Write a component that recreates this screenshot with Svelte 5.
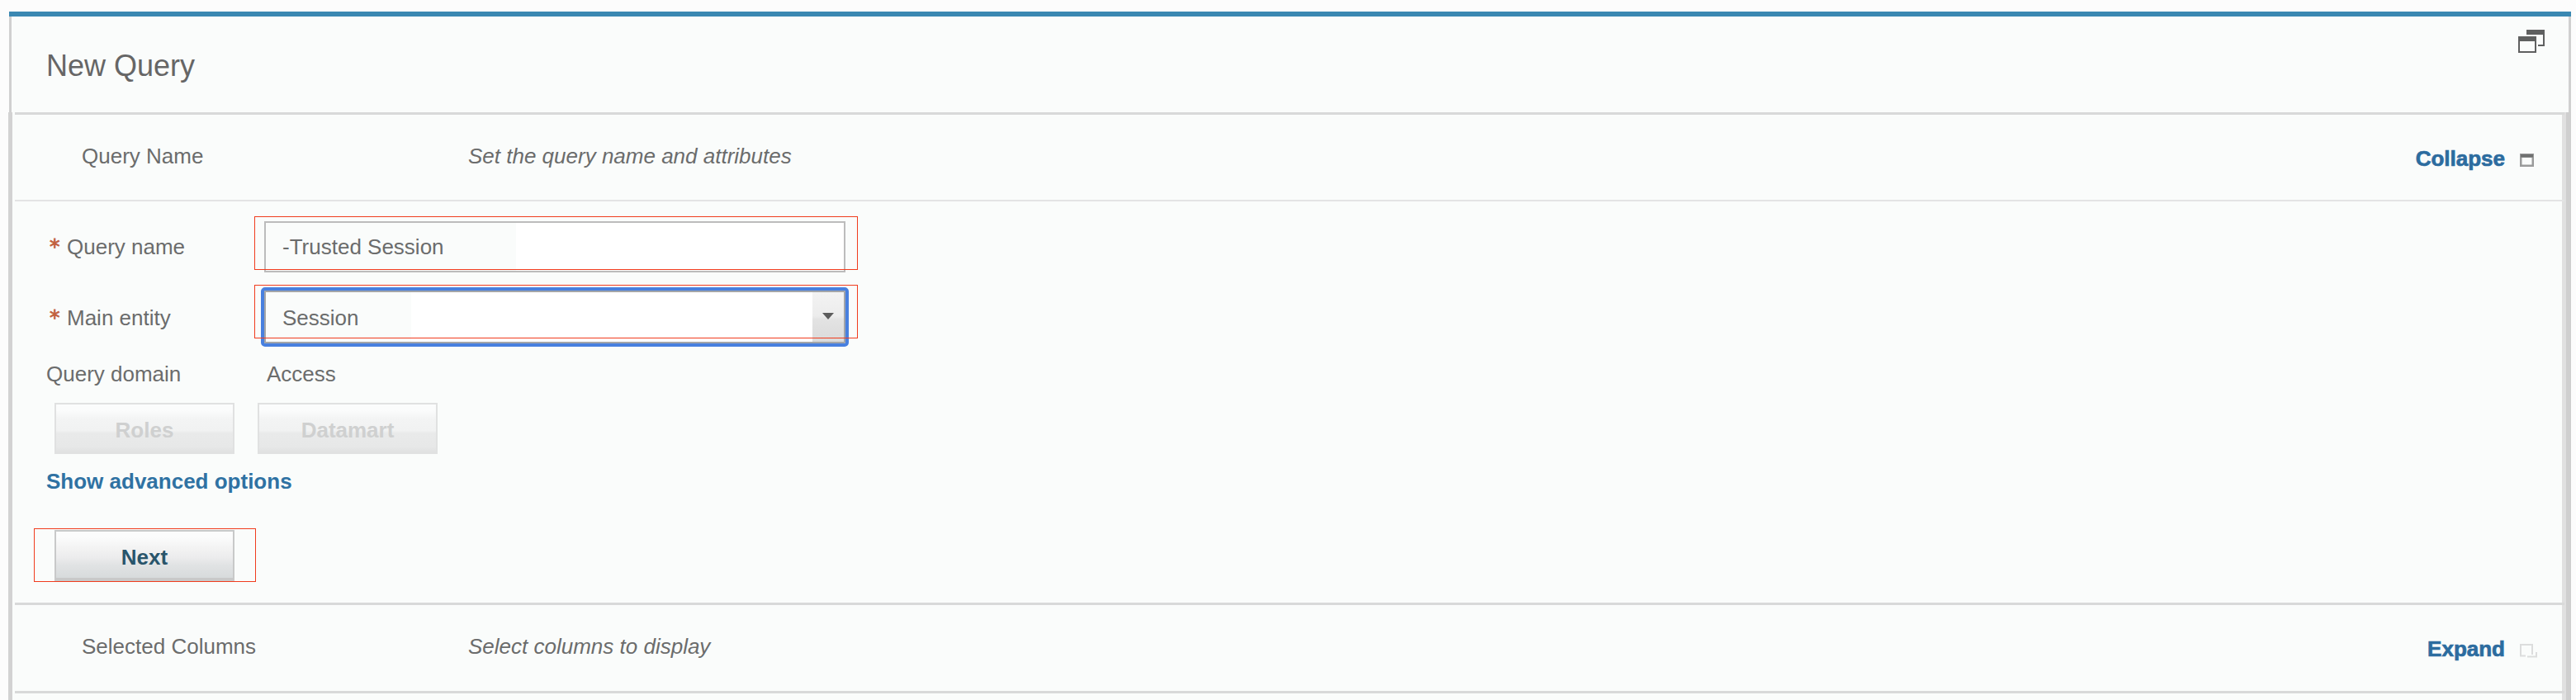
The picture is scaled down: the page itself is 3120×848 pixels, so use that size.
<script>
  const buttons = ['Roles', 'Datamart'];
</script>

<main>
  <div class="panel">
    <header>
      <h1>New Query</h1>
      <svg class="popout" viewBox="0 0 32 28" width="32" height="28">
        <path fill="#5f6060" d="M10 0h22v20h-8v-2h6V6H10z" />
        <path fill="#5f6060" fill-rule="evenodd" d="M0 8h22v20H0zM2 14v12h18V14z" />
      </svg>
    </header>

    <div class="body">
      <section class="bar">
        <span class="name">Query Name</span>
        <em>Set the query name and attributes</em>
        <a class="toggle">Collapse</a>
        <svg viewBox="0 0 17 16" width="17" height="16">
          <path fill="#9a9b9b" fill-rule="evenodd" d="M0 0h17v16H0zM2.5 5v8.5h12V5z" />
          <path fill="#6f7070" d="M1 1h15v3.5H1z" />
        </svg>
      </section>

      <section class="form">
        <div class="row">
          <span class="star">*</span><span class="label">Query name</span>
          <div class="mark"><div class="input">-Trusted Session</div></div>
        </div>
        <div class="row second">
          <span class="star">*</span><span class="label">Main entity</span>
          <div class="mark">
            <div class="input select">
              <span>Session</span>
              <i><svg viewBox="0 0 14 8" width="14" height="8"><path fill="#5c5c5c" d="M0 0h14L7 8z" /></svg></i>
            </div>
          </div>
        </div>
        <div class="domain"><span>Query domain</span><span>Access</span></div>
        <div class="buttons">
          {#each buttons as b}<button disabled>{b}</button>{/each}
        </div>
        <a class="advanced">Show advanced options</a>
        <div class="mark nextmark"><button class="next">Next</button></div>
      </section>

      <section class="bar lower">
        <span class="name">Selected Columns</span>
        <em>Select columns to display</em>
        <a class="toggle">Expand</a>
        <svg viewBox="0 0 17 16" width="17" height="16">
          <path fill="none" stroke="#dcdddd" stroke-width="2" d="M1 15.5V1h14v12M0 14.5h7M9 15.5h12M15 0v13M20 10v6" />
        </svg>
      </section>
    </div>
  </div>
</main>

<style>
  :global(body) { background: #fcfcfc; overflow: hidden; }
  main {
    box-sizing: border-box; width: 3120px; height: 848px; overflow: hidden;
    padding: 14px 6px 0 11px;
    font: 26px/30px "Liberation Sans", Arial, sans-serif; color: #6b6c6c;
  }
  .panel { height: 834px; border-top: 6px solid #3a88b2; background: #fafcfb; box-sizing: border-box; }
  header {
    box-sizing: border-box; height: 116px; display: flex; justify-content: space-between;
    border-left: 3px solid #d0d0d0; border-right: 3px solid #d0d0d0; padding: 16px 29px 0 42px;
  }
  h1 { margin: 23px 0 0; font-size: 36px; line-height: 42px; font-weight: 400; color: #666; }
  .body {
    box-sizing: border-box; height: 712px; margin-left: -1px;
    border-left: 5px solid #d2d2d2; border-right: 6px solid #cfcfcf;
    padding: 0 2px 0 3px;
    box-shadow: inset -5px 0 #e0e0e0;
  }
  section { box-sizing: border-box; }
  .bar {
    height: 108px; display: flex; align-items: flex-start;
    border-top: 3px solid #d8d9d9; border-bottom: 2px solid #e3e4e4; padding: 35px 37px 0 81px;
  }
  .lower { height: 110px; border-bottom: 3px solid #d8d9d9; }
  .bar .name { width: 468px; }
  .bar em { flex: 1; }
  .toggle { font-weight: 700; color: #2c6c9f; margin: 3px 18px 0 0; -webkit-text-stroke: .7px #2c6c9f; }
  .bar svg { margin-top: 12px; overflow: visible; }
  .form { height: 486px; padding: 18px 0 0 23px; }
  .row { height: 65px; display: flex; }
  .row.second { margin-top: 18px; }
  .star {
    box-sizing: border-box; width: 40px; padding: 22px 0 0 19px;
    font-family: "DejaVu Sans", sans-serif; font-size: 25px; color: #c2603f; -webkit-text-stroke: .8px #c2603f;
  }
  .label { width: 227px; padding-top: 22px; }
  .second .star, .second .label { padding-top: 25px; }
  .mark { position: relative; box-sizing: border-box; width: 731px; height: 65px; padding: 6px 0 0 12px; }
  .mark::after { content: ""; position: absolute; inset: 0; border: 1px solid #f03c1e; }
  .second .mark { padding-top: 7px; }
  .input {
    box-sizing: border-box; width: 704px; height: 62px; border: 2px solid #bcbcbc;
    padding: 14px 0 0 20px;
    background: linear-gradient(90deg, #fafcfb 303px, #fff 303px);
  }
  .select {
    height: 64px; display: flex; justify-content: space-between; padding-top: 0;
    border-color: #a3a5a8; outline: 4px solid #4880df; border-radius: 1px;
    background: linear-gradient(90deg, #fafcfb 176px, #fff 176px);
  }
  .select span { padding-top: 16px; }
  .select i { width: 38px; background: linear-gradient(#f3f3f3, #ececec 48%, #e3e3e3 55%, #dadada); }
  .select svg { display: block; margin: 25px 0 0 12px; }
  .domain { display: flex; margin-top: 28px; padding-left: 15px; }
  .domain span:first-child { width: 267px; }
  .buttons { display: flex; gap: 28px; margin-top: 20px; padding-left: 25px; }
  button {
    display: block; box-sizing: border-box; width: 218px; height: 62px; margin: 0; padding: 4px 0 0;
    border: 2px solid #e0e1e1; border-radius: 0;
    font: 700 26px/30px "Liberation Sans", Arial, sans-serif; color: #cfd0d0;
    background: linear-gradient(#fbfcfc 12%, #f3f4f4 30%, #f1f2f2 54%, #e9eaea 60%, #e7e8e8 88%, #e0e1e1);
  }
  .advanced { display: block; margin: 18px 0 42px 15px; font-weight: 700; color: #2f72a3; }
  .nextmark { width: 269px; padding: 2px 0 0 25px; }
  .next {
    padding-top: 6px;
    border-color: #c8c9c9; border-bottom-width: 4px; color: #29556b;
    background: linear-gradient(#fbfcfc 12%, #f4f4f4 32%, #ececed 56%, #e1e3e4 72%, #d7dbdc);
  }
</style>
